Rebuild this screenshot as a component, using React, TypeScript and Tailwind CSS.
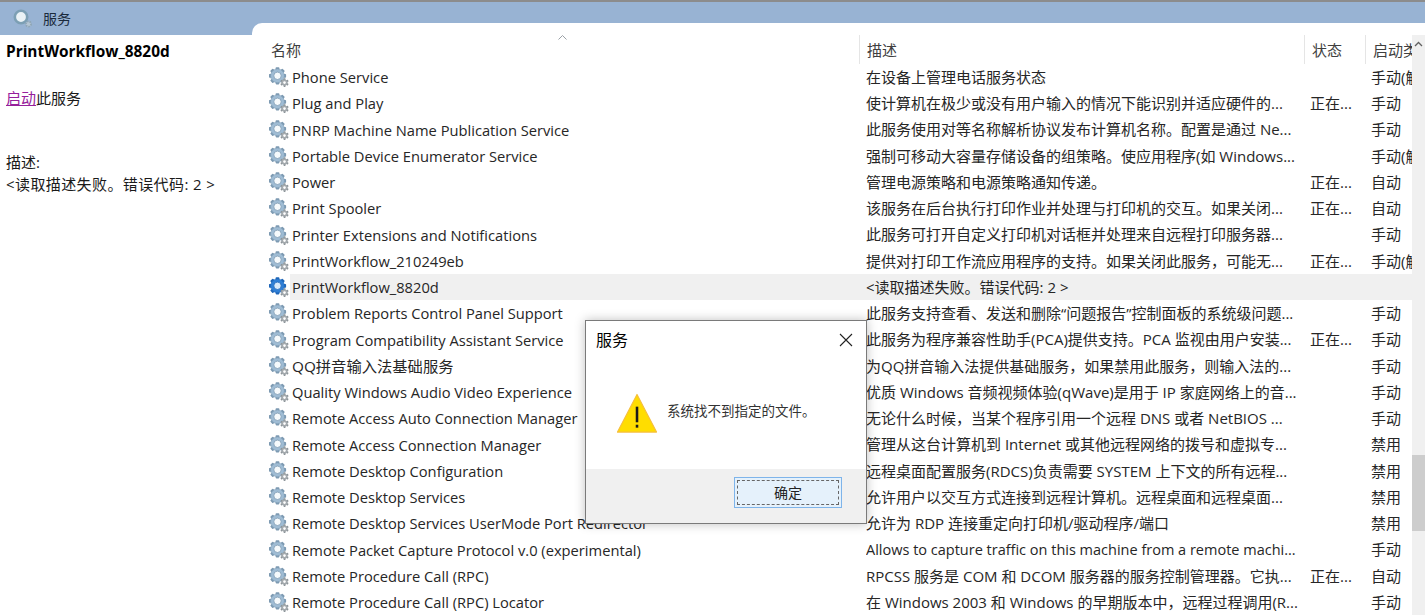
import React from 'react';

const FONT = '"Open Sans", "Noto Sans CJK SC", sans-serif';

type ServiceRow = {
  name: string;
  desc: string;
  status?: string;
  startup?: string;
  selected?: boolean;
  latinDesc?: boolean;
  cjkName?: boolean;
};

const rows: ServiceRow[] = [
  { name: 'Phone Service', desc: '在设备上管理电话服务状态', startup: '手动(触' },
  { name: 'Plug and Play', desc: '使计算机在极少或没有用户输入的情况下能识别并适应硬件的...', status: '正在...', startup: '手动' },
  { name: 'PNRP Machine Name Publication Service', desc: '此服务使用对等名称解析协议发布计算机名称。配置是通过 Ne...', startup: '手动' },
  { name: 'Portable Device Enumerator Service', desc: '强制可移动大容量存储设备的组策略。使应用程序(如 Windows...', startup: '手动(触' },
  { name: 'Power', desc: '管理电源策略和电源策略通知传递。', status: '正在...', startup: '自动' },
  { name: 'Print Spooler', desc: '该服务在后台执行打印作业并处理与打印机的交互。如果关闭...', status: '正在...', startup: '自动' },
  { name: 'Printer Extensions and Notifications', desc: '此服务可打开自定义打印机对话框并处理来自远程打印服务器...', startup: '手动' },
  { name: 'PrintWorkflow_210249eb', desc: '提供对打印工作流应用程序的支持。如果关闭此服务，可能无...', status: '正在...', startup: '手动(触' },
  { name: 'PrintWorkflow_8820d', desc: '<读取描述失败。错误代码: 2 >', selected: true },
  { name: 'Problem Reports Control Panel Support', desc: '此服务支持查看、发送和删除“问题报告”控制面板的系统级问题...', startup: '手动' },
  { name: 'Program Compatibility Assistant Service', desc: '此服务为程序兼容性助手(PCA)提供支持。PCA 监视由用户安装...', status: '正在...', startup: '手动' },
  { name: 'QQ拼音输入法基础服务', desc: '为QQ拼音输入法提供基础服务，如果禁用此服务，则输入法的...', startup: '手动', cjkName: true },
  { name: 'Quality Windows Audio Video Experience', desc: '优质 Windows 音频视频体验(qWave)是用于 IP 家庭网络上的音...', startup: '手动' },
  { name: 'Remote Access Auto Connection Manager', desc: '无论什么时候，当某个程序引用一个远程 DNS 或者 NetBIOS ...', startup: '手动' },
  { name: 'Remote Access Connection Manager', desc: '管理从这台计算机到 Internet 或其他远程网络的拨号和虚拟专...', startup: '禁用' },
  { name: 'Remote Desktop Configuration', desc: '远程桌面配置服务(RDCS)负责需要 SYSTEM 上下文的所有远程...', startup: '禁用' },
  { name: 'Remote Desktop Services', desc: '允许用户以交互方式连接到远程计算机。远程桌面和远程桌面...', startup: '禁用' },
  { name: 'Remote Desktop Services UserMode Port Redirector', desc: '允许为 RDP 连接重定向打印机/驱动程序/端口', startup: '禁用' },
  { name: 'Remote Packet Capture Protocol v.0 (experimental)', desc: 'Allows to capture traffic on this machine from a remote machi...', startup: '手动', latinDesc: true },
  { name: 'Remote Procedure Call (RPC)', desc: 'RPCSS 服务是 COM 和 DCOM 服务器的服务控制管理器。它执...', status: '正在...', startup: '自动' },
  { name: 'Remote Procedure Call (RPC) Locator', desc: '在 Windows 2003 和 Windows 的早期版本中，远程过程调用(R...', startup: '手动' },
];

// big cog with a small grey cog at its lower right
function GearIcon({ active = false }: { active?: boolean }) {
  const main = active ? '#2f7fd6' : '#9fbcd4';
  const rim = active ? '#1f66b8' : '#7d9ab2';
  const hub = active ? '#d8e9fa' : '#f6fafc';
  const teeth = [0, 45, 90, 135];
  const small = [0, 60, 120];
  return (
    <svg width="21" height="22" viewBox="0 0 21 22" className="shrink-0">
      {teeth.map((a) => (
        <rect key={a} x="6.6" y="1.2" width="3.8" height="17.2" rx="0.8" fill={rim} transform={`rotate(${a} 8.5 9.8)`} />
      ))}
      <circle cx="8.5" cy="9.8" r="6.9" fill={main} stroke={rim} strokeWidth="0.5" />
      <circle cx="8.5" cy="9.8" r="3.7" fill={hub} stroke={rim} strokeWidth="0.8" />
      {small.map((a) => (
        <rect key={a} x="14.6" y="12.3" width="1.9" height="8.6" rx="0.4" fill="#8c9499" transform={`rotate(${a} 15.5 16.6)`} />
      ))}
      <circle cx="15.5" cy="16.6" r="3.1" fill="#a3a9ad" />
      <circle cx="15.5" cy="16.6" r="1.3" fill="#ffffff" />
    </svg>
  );
}

function TitleIcon() {
  return (
    <svg width="20" height="20" viewBox="0 0 20 20" className="shrink-0">
      <circle cx="8" cy="8" r="6.2" fill="#eaf2f6" stroke="#7c9fb4" strokeWidth="2.6" />
      <circle cx="15.5" cy="15" r="2.6" fill="#b5c6d4" stroke="#8fa6b5" strokeWidth="1.8" strokeDasharray="1.6 1" />
    </svg>
  );
}

function WarningIcon() {
  return (
    <svg width="41" height="41" viewBox="0 0 42 42" className="shrink-0">
      <path d="M20.5 1.5 L40.5 40 L0.5 40 Z" fill="#ffdd00" stroke="#f6bf3c" strokeWidth="1.2" strokeLinejoin="round" />
      <rect x="19.2" y="14" width="2.6" height="16" fill="#1a1a1a" />
      <rect x="19.2" y="32.5" width="2.6" height="3" fill="#1a1a1a" />
    </svg>
  );
}

function HeaderCell({ label, className }: { label: string; className: string }) {
  return (
    <div className={`flex items-center h-[29.4px] pl-[7px] pt-[1px] border-r border-[#e5e5e5] overflow-hidden whitespace-nowrap text-[#3f3f3f] ${className}`}>
      {label}
    </div>
  );
}

function Dialog() {
  return (
    <div className="absolute left-[585px] top-[318px] w-[282px] h-[204px] flex flex-col bg-white border border-[#7a7a7a] shadow-[0_0_10px_rgba(0,0,0,0.25)] text-[#1a1a1a]">
      <div className="flex items-center justify-between h-[37px] pl-[10px] pr-[13px] text-[16px] text-black">
        <span>服务</span>
        <svg width="14" height="14" viewBox="0 0 14 14">
          <path d="M1 1 L13 13 M13 1 L1 13" stroke="#222" strokeWidth="1.1" />
        </svg>
      </div>
      <div className="flex-1 flex items-center pl-[31px] gap-[9px] text-[13.5px] text-[#333]">
        <WarningIcon />
        <span className="-mt-[4px]">系统找不到指定的文件。</span>
      </div>
      <div className="h-[54px] bg-[#f0f0f0] flex justify-end items-start pt-[8px] pr-[24px]">
        <button className="w-[108px] h-[31px] border border-[#7eb4ea] p-[2px] bg-[#e5f1fb]">
          <span className="flex items-center justify-center w-full h-full border border-dashed border-[#666] text-[14px] text-[#222]">确定</span>
        </button>
      </div>
    </div>
  );
}

export default function App() {
  return (
    <div className="relative w-[1425px] h-[615px] overflow-hidden flex flex-col bg-[#98b3d3] border-t-2 border-[#8c8c8c]" style={{ fontFamily: FONT }}>
      <div className="flex items-center h-[21px] pl-[13px] gap-[10px] text-[14px] text-[#1a2a3c] pt-[12px]">
        <TitleIcon />
        <span>服务</span>
      </div>

      <div className="flex-1 flex min-h-0">
        {/* left description pane */}
        <div className="w-[252px] flex flex-col">
          <div className="h-[12px]" />
          <div className="flex-1 bg-white pl-[6px] text-[15px] text-[#1a1a1a]">
            <div className="mt-[6px] h-[22px] leading-[22px] text-[15.4px] font-bold text-black">PrintWorkflow_8820d</div>
            <div className="mt-[24px] h-[22px] leading-[22px]">
              <span className="text-[#96209b] underline">启动</span>此服务
            </div>
            <div className="mt-[43px] h-[21px] leading-[21px]">描述:</div>
            <div className="h-[22px] leading-[22px] tracking-[0.4px]">{'<读取描述失败。错误代码: 2 >'}</div>
          </div>
        </div>

        {/* service list */}
        <div className="flex-1 flex bg-white rounded-tl-[10px] overflow-hidden min-w-0">
          <div className="flex-1 min-w-0 text-[15px] text-[#262626]">
            <div className="relative flex pl-[12px] pt-[12px] h-[41.1px]">
              <svg width="9" height="5" viewBox="0 0 9 5" className="absolute left-[306px] top-[12px]">
                <path d="M0.5 4.5 L4.5 0.5 L8.5 4.5" fill="none" stroke="#9aa0a6" />
              </svg>
              <HeaderCell label="名称" className="w-[596px]" />
              <HeaderCell label="描述" className="w-[445px]" />
              <HeaderCell label="状态" className="w-[61px]" />
              <HeaderCell label="启动类型" className="flex-1 border-r-0" />
            </div>
            {rows.map((row) => (
              <div key={row.name} className="flex items-center h-[26.25px] pl-[17px] whitespace-nowrap">
                <GearIcon active={row.selected} />
                <div className={`flex flex-1 items-center h-full min-w-0 ${row.selected ? 'bg-[#f0f0f0]' : ''}`}>
                  <div className={`w-[576px] pl-[2px] overflow-hidden ${row.cjkName ? 'text-[15.3px]' : 'text-[14.7px]'}`}>{row.name}</div>
                  <div className={`w-[444px] overflow-hidden ${row.latinDesc ? 'text-[14.5px]' : ''}`}>{row.desc}</div>
                  <div className="w-[61px] overflow-hidden">{row.status}</div>
                  <div className="flex-1 overflow-hidden">{row.startup}</div>
                </div>
              </div>
            ))}
          </div>

          {/* scrollbar */}
          <div className="w-[13px] mt-[12px] bg-[#f0f0f0] flex flex-col items-center">
            <svg width="9" height="6" viewBox="0 0 9 6" className="mt-[6px]">
              <path d="M1 5 L4.5 1.5 L8 5" fill="none" stroke="#606060" strokeWidth="1.3" />
            </svg>
            <div className="mt-[408px] w-full h-[76px] bg-[#cdcdcd]" />
          </div>
        </div>
      </div>

      <Dialog />
    </div>
  );
}
